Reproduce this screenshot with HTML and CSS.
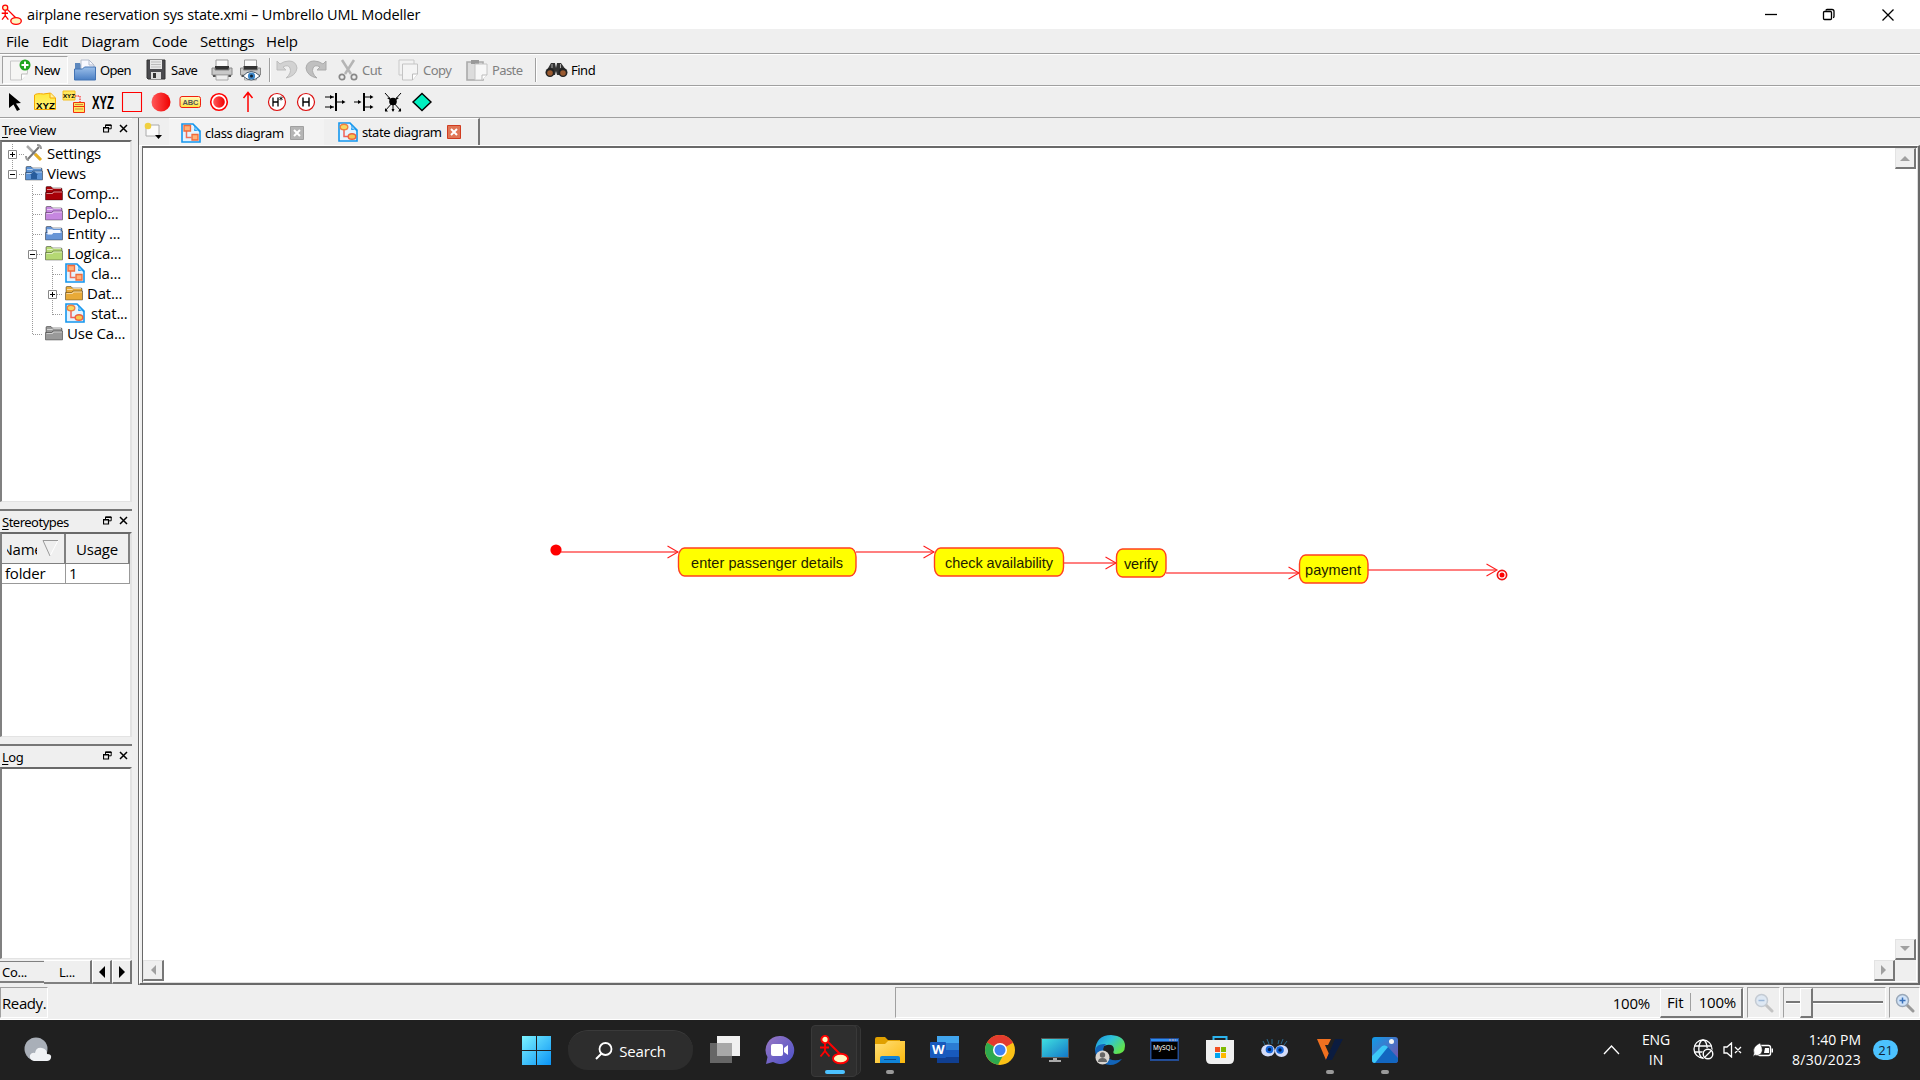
FILE: index.html
```html
<!DOCTYPE html>
<html lang="en">
<head>
<meta charset="utf-8">
<title>airplane reservation sys state.xmi – Umbrello UML Modeller</title>
<link rel="stylesheet" href="styles.css">
</head>
<body>
<svg class="defs" width="0" height="0">
  <defs>
    <linearGradient id="gRed"><stop offset="0" stop-color="#ff5a5a"/><stop offset="1" stop-color="#f00000"/></linearGradient>
    <linearGradient id="gYel" x2="0" y2="1"><stop offset="0" stop-color="#fffbc0"/><stop offset="1" stop-color="#ffe23c"/></linearGradient>
    <linearGradient id="gNote" x2="0" y2="1"><stop offset="0" stop-color="#ffe83c"/><stop offset="1" stop-color="#fff27a"/></linearGradient>
    <linearGradient id="gBlue" x2="0" y2="1"><stop offset="0" stop-color="#9dc0ea"/><stop offset="1" stop-color="#4a7fc4"/></linearGradient>
    <linearGradient id="gWin" x2="1" y2="1"><stop offset="0" stop-color="#7cf3ff"/><stop offset="1" stop-color="#0a93f5"/></linearGradient>
    <linearGradient id="gChat" x2="1" y2="1"><stop offset="0" stop-color="#9a78c4"/><stop offset="1" stop-color="#4a50c8"/></linearGradient>
    <linearGradient id="gFold" x2="1" y2="1"><stop offset="0" stop-color="#ffdf78"/><stop offset="1" stop-color="#fbb80c"/></linearGradient>
    <linearGradient id="gMon" x2="1" y2="1"><stop offset="0" stop-color="#3fe0e0"/><stop offset="1" stop-color="#1478c8"/></linearGradient>
    <linearGradient id="gEdge" x2="1" y2=".6"><stop offset="0" stop-color="#1b8be0"/><stop offset=".5" stop-color="#2fc4d8"/><stop offset="1" stop-color="#62e34a"/></linearGradient>
    <linearGradient id="gPhoto" x2="1" y2="1"><stop offset="0" stop-color="#0f9be8"/><stop offset="1" stop-color="#7a4fa8"/></linearGradient>
    <symbol id="folder" viewBox="0 0 18 16"><path d="M1 14V2.500q0-1 1-1h4l1.500 1.500H16q1 0 1 1V14z" fill="currentColor" stroke="#0006"/><path d="M2 4.500h5l1.500-1H16" stroke="#fff9" fill="none"/><path d="M.5 15V7.500h6l1.500-1.500h9.500V15z" fill="currentColor" stroke="#0005"/><path d="M1.500 8.500h6L8.500 7H17" stroke="#fff8" fill="none"/></symbol>
    <symbol id="classdoc" viewBox="0 0 20 20"><path d="M1 1h11l7 7v11H1z" fill="#e4f3ff" stroke="#1597ee" stroke-width="1.600"/><path d="M12 1q3 2 1.500 6.500Q17 6 19 9z" fill="#a9dcff" stroke="#1597ee"/><path d="M5.500 8v6.500h5" fill="none" stroke="#f0705a" stroke-width="1.500"/><path d="M3 2.500h6.500v5.500H3zM11 11.500h6v5.500h-6z" fill="#ffb27a" stroke="#f06a3a" stroke-width="1.300"/></symbol>
    <symbol id="statedoc" viewBox="0 0 20 20"><path d="M1 1h11l7 7v11H1z" fill="#e4f3ff" stroke="#1597ee" stroke-width="1.600"/><path d="M12 1q3 2 1.500 6.500Q17 6 19 9z" fill="#a9dcff" stroke="#1597ee"/><path d="M6 7v7.500h4" fill="none" stroke="#f0605a" stroke-width="1.500"/><ellipse cx="6" cy="5" rx="3.800" ry="2.800" fill="#f6d860" stroke="#f08040" stroke-width="1.400"/><ellipse cx="14" cy="14.500" rx="3.800" ry="2.800" fill="#f6c850" stroke="#f06040" stroke-width="1.400"/></symbol>
    <symbol id="umbrello" viewBox="0 0 30 30"><g stroke="#f00" stroke-width="1.900" fill="#fff6c0"><path d="M6 8v8M1 12.500h9M6 16l-4.500 5.500M6 16l4.500 5.500M9 7l12 12" fill="none"/><circle cx="6" cy="4.500" r="3.600"/><ellipse cx="21.500" cy="23.500" rx="7.500" ry="4.800"/></g></symbol>
    <symbol id="restore" viewBox="0 0 9 9"><path d="M2.500 3V.8h5.700v4H6M2.500 1.500h6" fill="none" stroke="#000"/><path d="M.5 3.500h5v4.500h-5zM.5 4h5" fill="none" stroke="#000" stroke-width="1.200"/></symbol>
    <symbol id="close" viewBox="0 0 9 9"><path d="M1 1l7 7M8 1L1 8" stroke="#000" stroke-width="1.500"/></symbol>
    <symbol id="printer" viewBox="0 0 22 22"><path d="M5 1h12v9H5z" fill="#fafafa" stroke="#999"/><path d="M4 7h14v4H4z" fill="#333"/><path d="M1 9h3v2h14V9h3v7H1z" fill="#c9c9c9" stroke="#888"/><path d="M2 16h18v2H2z" fill="#555"/><path d="M5 16h12v5H5z" fill="#eee" stroke="#aaa"/></symbol>
    <symbol id="glass" viewBox="0 0 20 20"><path d="M12 12l6 6" stroke="#999" stroke-width="3" stroke-linecap="round"/><circle cx="7.500" cy="7.500" r="6" fill="#cfe2f8" stroke="#9aa8b8" stroke-width="1.500"/></symbol>
  </defs>
</svg>

<header class="titlebar">
  <svg class="app-icon" width="21" height="22"><use href="#umbrello"/></svg>
  <span class="title">airplane reservation sys state.xmi – Umbrello UML Modeller</span>
  <svg class="win-buttons" width="132" height="14"><g fill="none" stroke="#000" stroke-width="1.300"><path d="M0 6.500h12"/><path d="M58.500 4.500q0-1 1-1h6q1 0 1 1v6q0 1-1 1h-6q-1 0-1-1zM61 2.500q0-1 1-1h5q2 0 2 2v5q0 1-1 1"/><path d="M117.500 1.500l11 11M128.500 1.500l-11 11"/></g></svg>
</header>

<nav class="menubar"><span class="m1">File</span><span class="m2">Edit</span><span class="m3">Diagram</span><span class="m4">Code</span><span class="m5">Settings</span><span class="m6">Help</span></nav>

<div class="toolbar">
  <div class="tool tool-new"><svg width="22" height="22"><path d="M1.500 2h17v12l-6 7h-11z" fill="#f6f6f4" stroke="#c8c8c8"/><path d="M12.500 21v-6h6" fill="#fff" stroke="#bbb"/><circle cx="16" cy="6" r="5.500" fill="#1ea51e"/><path d="M16 2.500v7M12.500 6h7" stroke="#fff" stroke-width="2"/></svg><span>New</span></div>
  <div class="tool tool-open"><svg width="23" height="22"><path d="M1 4h5l1 2v8H1z" fill="#5d88be"/><path d="M7 1h8l5 5v9H7z" fill="#f8f8ff" stroke="#b4bccc"/><path d="M15 1v5h5" fill="none" stroke="#b4bccc"/><path d="M.5 21V10h8l2-2h11v13z" fill="url(#gBlue)" stroke="#4474b4"/></svg><span>Open</span></div>
  <div class="tool tool-save"><svg width="20" height="21"><path d="M1 1h18v19H2l-1-1z" fill="#4a4a4e" stroke="#333"/><path d="M4 1h12v9H4z" fill="#e8e8e8"/><path d="M5 3h10M5 5.500h10M5 8h10" stroke="#bbb"/><path d="M5 13h10v7H5z" fill="#ddd"/><path d="M7 14h3v5H7z" fill="#333"/></svg><span>Save</span></div>
  <svg class="ic-print" width="22" height="22"><use href="#printer"/></svg>
  <svg class="ic-preview" width="23" height="22"><use href="#printer"/><path d="M4 17q8-9 17 0q-9 8-17 0z" fill="#fff" stroke="#456"/><circle cx="12.500" cy="17" r="3.600" fill="#3b86c8"/><circle cx="12.500" cy="17" r="1.500" fill="#123"/></svg>
  <i class="sep sep-a"></i>
  <svg class="ic-undo" width="22" height="20"><path d="M1 1v9h9L7 7q5-3 7 1 2 5-4 10 10-2 11-10Q20 1 13 1 8 1 4 4z" fill="#d2d2d2" stroke="#bdbdbd"/></svg>
  <svg class="ic-redo" width="22" height="20"><path d="M21 1v9h-9l3-3q-5-3-7 1-2 5 4 10Q2 16 1 8 2 1 9 1q5 0 9 3z" fill="#c0c0c0" stroke="#ababab"/></svg>
  <div class="tool off tool-cut"><svg width="20" height="22"><path d="M4 1l9 14M16 1L7 15" stroke="#b5b5b5" stroke-width="2.500"/><circle cx="4" cy="18" r="2.700" fill="none" stroke="#888" stroke-width="1.700"/><circle cx="16" cy="18" r="2.700" fill="none" stroke="#888" stroke-width="1.700"/></svg><span>Cut</span></div>
  <div class="tool off tool-copy"><svg width="21" height="22"><path d="M1 1h15v15H1z" fill="#f2f2f2" stroke="#c9c9c9"/><path d="M4.500 5h15v10l-5 6h-10z" fill="#f4f4f4" stroke="#c4c4c4"/><path d="M14.500 21v-6h5" fill="#fff" stroke="#bbb"/></svg><span>Copy</span></div>
  <div class="tool off tool-paste"><svg width="22" height="22"><path d="M1 3h16v18H1z" fill="#dcdcdc" stroke="#aaa" stroke-width="1.600"/><path d="M5 1h8v4H5z" fill="#999"/><path d="M9 5h12v11l-5 5H9z" fill="#f7f7f7" stroke="#c4c4c4"/><path d="M16 21v-5h5" fill="#fff" stroke="#bbb"/></svg><span>Paste</span></div>
  <i class="sep sep-b"></i>
  <div class="tool tool-find"><svg width="23" height="18"><path d="M2 9L6 2h4l1 5 1-5h4l5 7-5 5h-4l-1-4-1 4H5z" fill="#333"/><circle cx="5" cy="11.500" r="4.500" fill="#222"/><circle cx="18" cy="11.500" r="4.500" fill="#222"/><circle cx="5" cy="12" r="2.800" fill="#9a5a30"/><circle cx="18" cy="12" r="2.800" fill="#9a5a30"/><path d="M7 3v4M15.500 3v4" stroke="#aaa"/></svg><span>Find</span></div>
</div>

<div class="palette">
  <svg viewBox="0 0 24 24"><path d="M5 3l12 10-5 .5 4 6-3 1.500-3.500-6.500L5 18z" fill="#000"/></svg>
  <svg viewBox="0 0 24 24"><path d="M1.500 19.500V5q2-2 9-1l7-1 5 5v11.500z" fill="url(#gNote)" stroke="#f5a800"/><path d="M17 3v5h5" fill="#fff2a0" stroke="#f5a800"/><text x="3" y="18.500" class="xyz-s" textLength="19" lengthAdjust="spacingAndGlyphs">XYZ</text></svg>
  <svg viewBox="0 0 24 24"><path d="M1 1h12v9H1z" fill="#ffe860" stroke="#f5c020"/><text x="1" y="8" class="xyz-t" textLength="12" lengthAdjust="spacingAndGlyphs">XYZ</text><path d="M13 6h5v6" fill="none" stroke="red" stroke-dasharray="1.500 1"/><path d="M11.500 12.500h11v10h-11zM11.500 16.500h11" fill="#ffe860" stroke="#f03010"/><path d="M13 14.500h8M13 19h8" stroke="#c84"/></svg>
  <svg viewBox="0 0 24 24"><text x="1" y="18.500" class="xyz-l" textLength="22" lengthAdjust="spacingAndGlyphs">XYZ</text></svg>
  <svg viewBox="0 0 24 24"><path d="M2.500 2.500h19v19h-19z" fill="none" stroke="red" stroke-width="1.100"/></svg>
  <svg viewBox="0 0 24 24"><circle cx="12" cy="12" r="9.500" fill="url(#gRed)"/></svg>
  <svg viewBox="0 0 24 24"><rect x="2" y="6.500" width="20.500" height="11" rx="2" fill="url(#gYel)" stroke="#f02010"/><text x="4.500" y="15" class="abc" textLength="16">ABC</text></svg>
  <svg viewBox="0 0 24 24"><circle cx="12" cy="12" r="8.300" fill="#fff" stroke="#f00" stroke-width="1.600"/><circle cx="12" cy="12" r="5.800" fill="url(#gRed)"/></svg>
  <svg viewBox="0 0 24 24"><path d="M12 22V3M7.500 8L12 2.500 16.500 8" fill="none" stroke="red" stroke-width="1.500"/></svg>
  <svg viewBox="0 0 24 24"><circle cx="12" cy="12" r="8.500" fill="#fff" stroke="#dc1010" stroke-width="1.200"/><path d="M8 7.500v9M13 7.500v9M8 12h5" stroke="#000" stroke-width="1.300"/><path d="M16 6.500v4M14.300 7.500l3.400 2M17.700 7.500l-3.400 2" stroke="#000" stroke-width=".8"/></svg>
  <svg viewBox="0 0 24 24"><circle cx="12" cy="12" r="8.500" fill="#fff" stroke="#dc1010" stroke-width="1.200"/><path d="M9 7.500v9M15 7.500v9M9 12h6" stroke="#000" stroke-width="1.400"/></svg>
  <svg viewBox="0 0 24 24"><path d="M13 3v18" stroke="#000" stroke-width="2"/><path d="M2 7h9M2 17h9M14 12h7" stroke="#000"/><path d="M7 5l3.500 2L7 9zM7 15l3.500 2L7 19zM19 10l3.500 2-3.500 2z"/></svg>
  <svg viewBox="0 0 24 24"><path d="M12 3v18" stroke="#000" stroke-width="2"/><path d="M2 12h6M12 7h7M12 17h7" stroke="#000"/><path d="M6 10l3.500 2L6 14zM18 5l3.500 2L18 9zM18 15l3.500 2-3.500 2z"/></svg>
  <svg viewBox="0 0 24 24"><path d="M4 3l16 18M20 3L4 21M12 12v9" stroke="#000"/><circle cx="12" cy="11.500" r="3.800"/><path d="M6 8l3-.5V10zM18 8l-3-.5V10zM10.500 19h3l-1.500 3zM4 18v3.500h3zM20 18v3.500h-3z"/></svg>
  <svg viewBox="0 0 24 24"><path d="M12 3.500L21 12l-9 8.500L3 12z" fill="#00f0c0" stroke="#000" stroke-width="1.400"/></svg>
</div>

<main class="workspace">
  <aside class="docks">
    <section class="dock dock-tree">
      <div class="dock-title"><span><u>T</u>ree View</span><svg width="9" height="9"><use href="#restore"/></svg><svg width="9" height="9"><use href="#close"/></svg></div>
      <div class="sunken tree">
        <svg class="branches" width="80" height="200"><g fill="none" stroke="#999" stroke-dasharray="1 1"><path d="M10.500 2v28M17 12.500h5M17 32.500h5M30.500 43v150M31 52.500h9M31 72.500h9M31 92.500h9M31 112.500h9M31 192.500h9M50.500 124v49M51 132.500h9M51 152.500h9M51 172.500h9"/></g><g fill="#fff" stroke="#888"><path d="M6.500 8.500h8v8h-8zM6.500 28.500h8v8h-8zM26.500 108.500h8v8h-8zM46.500 148.500h8v8h-8z"/></g><path d="M8 12.500h5M10.500 10v5M8 32.500h5M28 112.500h5M48 152.500h5M50.500 150v5" stroke="#000"/></svg>
        <div class="row l0"><svg width="18" height="18"><path d="M2 2l13 13" stroke="#aaa" stroke-width="2.500"/><path d="M14 3L3 15" stroke="#777" stroke-width="2"/><path d="M10 10l6 6" stroke="#e8b020" stroke-width="3"/><path d="M12 1q4 0 4 4M1 12q0 4 3 4" stroke="#999" fill="none" stroke-width="2"/></svg><span>Settings</span></div>
        <div class="row l0 views"><svg width="18" height="16"><use href="#folder"/><path d="M9 6l4 4h-1v4H6v-4H5z" fill="#285c9c"/></svg><span>Views</span></div>
        <div class="row l1 c-red"><svg width="18" height="16"><use href="#folder"/></svg><span>Comp...</span></div>
        <div class="row l1 c-violet"><svg width="18" height="16"><use href="#folder"/></svg><span>Deplo...</span></div>
        <div class="row l1 c-blue"><svg width="18" height="16"><use href="#folder"/><path d="M2.500 5h13v3H8l-1 1.500H2.500z" fill="#f4f8ff"/></svg><span>Entity ...</span></div>
        <div class="row l1 c-green"><svg width="18" height="16"><use href="#folder"/></svg><span>Logica...</span></div>
        <div class="row l2"><svg class="doc" width="20" height="20"><use href="#classdoc"/></svg><span>cla...</span></div>
        <div class="row l2 c-gold"><svg width="18" height="16"><use href="#folder"/></svg><span>Dat...</span></div>
        <div class="row l2"><svg class="doc" width="20" height="20"><use href="#statedoc"/></svg><span>stat...</span></div>
        <div class="row l1 c-gray"><svg width="18" height="16"><use href="#folder"/></svg><span>Use Ca...</span></div>
      </div>
    </section>
    <section class="dock dock-stereo">
      <div class="dock-title"><span><u>S</u>tereotypes</span><svg width="9" height="9"><use href="#restore"/></svg><svg width="9" height="9"><use href="#close"/></svg></div>
      <div class="sunken">
        <div class="grid">
          <div class="th th-name"><span class="clip"><span>Name</span></span><svg width="17" height="17"><path d="M16 .5L8 16" stroke="#fff"/><path d="M16 .5H1L8 16" fill="none" stroke="#999"/></svg></div><div class="th">Usage</div>
          <div class="td">folder</div><div class="td">1</div>
        </div>
      </div>
    </section>
    <section class="dock dock-log">
      <div class="dock-title"><span><u>L</u>og</span><svg width="9" height="9"><use href="#restore"/></svg><svg width="9" height="9"><use href="#close"/></svg></div>
      <div class="sunken"></div>
      <div class="dock-tabs"><span class="dt dt-a">Co...</span><span class="dt dt-b">L...</span><span class="arrow"><svg width="8" height="12"><path d="M7 0v12L1 6z"/></svg></span><span class="arrow"><svg width="8" height="12"><path d="M1 0v12l6-6z"/></svg></span></div>
    </section>
  </aside>

  <section class="editor">
    <div class="tabs">
      <div class="newtab"><svg width="20" height="18"><path d="M3 3h12v11H2V6" fill="#fbfbfb" stroke="#aaa"/><circle cx="4" cy="4" r="3.300" fill="#f0d040"/><path d="M11 13h7l-3.500 4z"/></svg></div>
      <div class="tab"><svg width="20" height="20"><use href="#classdoc"/></svg><span>class diagram</span><svg class="x" width="14" height="14"><path d="M.5.500h13v13H.5z" fill="#b5b5b5" stroke="#a0a0a0"/><path d="M4 4l6 6M10 4l-6 6" stroke="#fff" stroke-width="2"/></svg></div>
      <div class="tab active"><svg width="20" height="20"><use href="#statedoc"/></svg><span>state diagram</span><svg class="x" width="14" height="14"><path d="M.5.500h13v13H.5z" fill="#e07656" stroke="#d03c20"/><path d="M4 4l6 6M10 4l-6 6" stroke="#fff" stroke-width="2"/></svg></div>
    </div>
    <div class="pane">
      <div class="canvas">
        <svg class="diagram" viewBox="143 148 1775 834" width="1775" height="834">
          <defs><clipPath id="cutA"><path d="M600 540h500v30.500H600z"/></clipPath><clipPath id="cutB"><path d="M1300 550h70v27.500h-70z"/></clipPath></defs>
          <g fill="none" stroke="#ff7f7f" stroke-width="2"><path d="M561 552h117M856 552h78M1064 563h52M1166 573h133M1368 570h128"/></g>
          <g fill="none" stroke="#ff2020" stroke-width="1.100"><path d="M667.500 546l10.500 6-10.500 6M923.500 546l10.500 6-10.500 6M1105.500 557l10.500 6-10.500 6M1288.500 567l10.500 6-10.500 6M1486.500 564l10.500 6-10.500 6"/></g>
          <circle cx="556" cy="550" r="5.600" fill="red"/>
          <g fill="#ff0" stroke="#ff4020" stroke-width="1.400"><rect x="678.500" y="548" width="177.500" height="28" rx="6" ry="9"/><rect x="934.500" y="548" width="129" height="28" rx="6" ry="9"/><rect x="1116.500" y="549" width="49.500" height="28" rx="6" ry="8"/><rect x="1299.500" y="555" width="68.500" height="28" rx="6" ry="9"/></g>
          <g class="state-label"><g clip-path="url(#cutA)"><text x="691" y="568" textLength="152">enter passenger details</text><text x="945" y="568" textLength="108">check availability</text></g><text x="1124" y="569" textLength="34">verify</text><g clip-path="url(#cutB)"><text x="1305" y="575" textLength="56">payment</text></g></g>
          <circle cx="1502" cy="575" r="4.600" fill="#fff" stroke="#f01010" stroke-width="1.700"/><circle cx="1502" cy="575" r="2.500" fill="red"/>
        </svg>
        <span class="sb sb-up"><svg width="10" height="6"><path d="M0 6l5-5 5 5z"/></svg></span>
        <span class="sb sb-down"><svg width="10" height="6"><path d="M0 0l5 5 5-5z"/></svg></span>
        <span class="sb sb-left"><svg width="6" height="10"><path d="M6 0L1 5l5 5z"/></svg></span>
        <span class="sb sb-right"><svg width="6" height="10"><path d="M0 0l5 5-5 5z"/></svg></span>
        <span class="sb-corner"></span>
      </div>
    </div>
  </section>
</main>

<footer class="status">
  <div class="ready">Ready.</div>
  <div class="cell zoomtext"><span>100%</span><div class="raised"><span>Fit</span><i></i><span>100%</span></div></div>
  <div class="cell mag"><svg class="dim" width="20" height="20"><use href="#glass"/><path d="M4.500 7.500h6" stroke="#4a80c0" stroke-width="1.500"/></svg></div>
  <div class="cell slider"><i class="track"></i><i class="thumb"></i></div>
  <div class="cell mag last"><svg width="20" height="20"><use href="#glass"/><path d="M4.500 7.500h6M7.500 4.500v6" stroke="#3a70b8" stroke-width="1.500"/></svg></div>
</footer>

<div class="taskbar">
  <div class="weather"><svg width="32" height="28"><circle cx="14" cy="13" r="11.500" fill="#a9afb8"/><path d="M12 25q-5-1-4-6 2-3 5-2 1-6 7-5 5 1 5 6 5 0 4 4-1 3-4 3z" fill="#f0f2f5"/></svg></div>
  <div class="apps">
    <div class="app start"><svg width="29" height="29"><path d="M0 0h14v14H0zM15 0h14v14H15zM0 15h14v14H0zM15 15h14v14H15z" fill="url(#gWin)"/></svg></div>
    <div class="search"><svg width="18" height="18"><circle cx="10.500" cy="7" r="6" fill="none" stroke="#fff" stroke-width="1.800"/><path d="M6.500 11.500L1 17" stroke="#fff" stroke-width="2"/></svg><span>Search</span></div>
    <div class="app"><svg width="30" height="30"><path d="M7 1h23v20H7z" fill="#f0f0f0"/><path d="M0 8h22v20H0z" fill="#666"/><path d="M7 8h15v13H7z" fill="#a8a8a8"/></svg></div>
    <div class="app"><svg width="30" height="30"><path d="M15 1a14 14 0 1 1-7 26l-7 2 1.500-7A14 14 0 0 1 15 1z" fill="url(#gChat)"/><rect x="6" y="9" width="12" height="12" rx="2" fill="#fff"/><path d="M19 13l4-3v10l-4-3z" fill="#fff"/></svg></div>
    <div class="app current"><i class="stack"></i><svg width="32" height="30"><use href="#umbrello"/></svg></div>
    <div class="app open"><svg width="30" height="30"><path d="M0 4q0-2 2-2h8l3 3h12v7H0z" fill="#e0a000"/><path d="M0 9h10l3-3h17v22H0z" fill="url(#gFold)"/><path d="M5 28v-5q0-2 2-2h16q2 0 2 2v5z" fill="#1084d8"/><path d="M9 24.500h12" stroke="#0a4c90"/></svg></div>
    <div class="app"><svg width="30" height="30"><path d="M7 1h22v7H7z" fill="#41a5ee"/><path d="M7 8h22v7H7z" fill="#2b7cd3"/><path d="M7 15h22v7H7z" fill="#185abd"/><path d="M7 22h22v6H7z" fill="#103f91"/><rect y="7" width="16" height="16" rx="1" fill="#185abd"/><text x="2" y="19" class="word">W</text></svg></div>
    <div class="app"><svg width="30" height="30"><circle cx="15" cy="15" r="15" fill="#fbc116"/><path d="M15 15L2 7.500A15 15 0 0 1 28 7.500z" fill="#e33b2e"/><path d="M15 15L2 7.500A15 15 0 0 0 13 29.800l6-11z" fill="#2da94f"/><path d="M15 7.500h13L15 15z" fill="#e33b2e"/><circle cx="15" cy="15" r="7" fill="#fff"/><circle cx="15" cy="15" r="5.500" fill="#3e82f1"/></svg></div>
    <div class="app"><svg width="28" height="28"><path d="M0 2h28v20H0z" fill="#555"/><path d="M1 3h26v18H1z" fill="url(#gMon)"/><path d="M12 22h4v2h4v2H8v-2h4z" fill="#aaa"/></svg></div>
    <div class="app"><svg width="30" height="30"><path d="M0 16Q1 0 16 0q14 1 14 11 0 8-9 8-4 0-2-4 0-6-7-5Q3 12 0 16z" fill="url(#gEdge)"/><path d="M0 15Q2 8 11 9q-5 4-1 11 6 8 17 4-5 6-12 6Q1 29 0 15z" fill="#1264b8"/><circle cx="7.500" cy="22.500" r="7" fill="#d8d4d0"/><circle cx="7.500" cy="20" r="2.700" fill="#666"/><path d="M3 27q0-4 4.500-4t4.500 4z" fill="#666"/></svg></div>
    <div class="app"><svg width="29" height="26"><path d="M0 1h29v23H0z" fill="#234c94"/><path d="M1.500 5h26v17h-26z" fill="#000"/><path d="M1 2h27v2H1z" fill="#2d8df0"/><path d="M19 3h7" stroke="#f8a090" stroke-dasharray="2 1"/><text x="3" y="13" class="mysql" textLength="23" lengthAdjust="spacingAndGlyphs">MySQL›</text></svg></div>
    <div class="app"><svg width="30" height="30"><path d="M8.500 7V2h13v5" fill="none" stroke="#2cb4ee" stroke-width="2"/><path d="M1 5h28v19q0 5-5 5H6q-5 0-5-5z" fill="#f0f0f0"/><path d="M10 12h5v5h-5z" fill="#f25022"/><path d="M16 12h5v5h-5z" fill="#7fba00"/><path d="M10 18h5v5h-5z" fill="#00a4ef"/><path d="M16 18h5v5h-5z" fill="#ffb900"/></svg></div>
    <div class="app"><svg width="28" height="22"><path d="M4 6L2 2M8 5L6 0M11 5V0M17 5l1-4M20 5l2-5M23 6l3-4" stroke="#2d7caa" stroke-width=".8"/><ellipse cx="7" cy="11.500" rx="6.800" ry="6" fill="#d4dcf8"/><ellipse cx="20.500" cy="12" rx="6.600" ry="6" fill="#d4dcf8"/><circle cx="8.500" cy="10.500" r="3.800" fill="#1465d8"/><circle cx="19" cy="11" r="3.800" fill="#1465d8"/><circle cx="8.500" cy="10.500" r="1.700" fill="#001b4c"/><circle cx="19" cy="11" r="1.700" fill="#001b4c"/></svg></div>
    <div class="app open"><svg width="26" height="24"><path d="M0 1h14l-3 6H8l4 9-3 6z" fill="#f07020"/><path d="M26 1h-8l-9 21h6z" fill="#0b1c40"/></svg></div>
    <div class="app open"><svg width="26" height="28"><rect y="1" width="26" height="26" rx="3" fill="url(#gPhoto)"/><path d="M0 21l10-11q3-2 6 1l10 11v2q0 3-3 3H3q-3 0-3-3z" fill="#1266c0"/><path d="M0 20l10-10q3-2 6 1L3 27q-3 0-3-3z" fill="#3cc8f8"/><circle cx="19.500" cy="5.500" r="2.500" fill="#f4f4f4"/></svg></div>
  </div>
  <div class="tray">
    <svg class="chev" width="17" height="10"><path d="M1 9l7.500-8L16 9" fill="none" stroke="#fff" stroke-width="1.300"/></svg>
    <div class="lang">ENG<br>IN</div>
    <svg class="globe" width="22" height="22"><g fill="none" stroke="#fff" stroke-width="1.300"><circle cx="10" cy="10" r="9"/><ellipse cx="10" cy="10" rx="4.200" ry="9"/><path d="M1.500 7h17M1.500 13h9"/></g><circle cx="15" cy="15" r="6" fill="#202020"/><circle cx="15" cy="15" r="4.800" fill="none" stroke="#fff" stroke-width="1.400"/><path d="M11.500 18.500l7-7" stroke="#fff" stroke-width="1.300"/></svg>
    <svg class="speaker" width="20" height="16"><path d="M1 5h3l4.500-4v14L4 11H1zM12 5l6 6M18 5l-6 6" fill="none" stroke="#fff" stroke-width="1.300"/></svg>
    <svg class="battery" width="21" height="16"><rect x="5" y="3.500" width="12.500" height="10" rx="2" fill="none" stroke="#fff" stroke-width="1.400"/><path d="M12 6h4v5h-5z" fill="#fff"/><path d="M18.500 6.500h1.500v4h-1.500z" fill="#fff"/><path d="M0 15l1-4Q-1 5 7 1q5 9-1 12-2 1-4 0z" fill="#fff" stroke="#202020" stroke-width=".5"/></svg>
    <div class="clock"><span>1:40 PM</span><span class="date">8/30/2023</span></div>
    <div class="badge">21</div>
  </div>
</div>
</body>
</html>
```
FILE: styles.css
```css
* { box-sizing: border-box; }
body { margin: 0; width: 1920px; height: 1080px; overflow: hidden; display: flex; flex-direction: column; background: #efefef; color: #000; font: 15px/20px "Open Sans", "Noto Sans", sans-serif; }
svg { display: block; flex: none; }
span { white-space: nowrap; }
.defs { position: absolute; }
.titlebar { height: 29px; flex: none; background: #fff; display: flex; align-items: center; padding: 0 23px 0 1px; }
.app-icon { margin-right: 5px; }
.title { font-size: 14.500px; letter-spacing: -.17px; }
.win-buttons { margin-left: auto; }
.menubar { height: 25px; flex: none; display: flex; align-items: center; padding-left: 6px; border-bottom: 1px solid #a0a0a0; box-shadow: 0 1px #fff; }
.menubar span { font-size: 15px; letter-spacing: -.15px; }
.m1 { width: 36px; } .m2 { width: 39px; } .m3 { width: 71px; } .m4 { width: 48px; } .m5 { width: 66px; }
.toolbar { height: 32px; flex: none; display: flex; align-items: center; border-bottom: 1px solid #a0a0a0; box-shadow: 0 1px #fff; padding-left: 2px; font: 13px/20px "Noto Sans", sans-serif; letter-spacing: -.5px; }
.tool { display: flex; align-items: center; height: 28px; gap: 4px; }
.tool-new { width: 66px; padding-left: 6px; gap: 3px; border: 1px solid #a0a0a0; border-right-color: #fff; border-bottom-color: #fff; background: #f4f4f4; }
.tool-open { width: 72px; padding-left: 6px; gap: 3px; }
.tool-open span { letter-spacing: -.7px; }
.tool-save { width: 71px; padding-left: 6px; gap: 5px; }
.ic-preview { margin-left: 6px; }
.sep { width: 2px; height: 24px; border-left: 1px solid #a0a0a0; border-right: 1px solid #fff; }
.sep-a { margin: 0 5px 0 7px; }
.ic-redo { margin-left: 7px; }
.off { color: #808080; }
.tool-cut { margin-left: 11px; width: 60px; }
.tool-copy { width: 68px; }
.tool-paste { width: 69px; }
.tool-paste span { letter-spacing: -.6px; }
.sep-b { margin-right: 8px; }
.tool-find { gap: 3px; }
.palette { height: 32px; flex: none; display: flex; align-items: center; gap: 5px; padding-left: 4px; border-bottom: 1px solid #a0a0a0; }
.palette svg { width: 24px; height: 24px; }
.xyz-s { font: bold 9px "Liberation Sans", sans-serif; }
.xyz-t { font: bold 6px "Liberation Sans", sans-serif; }
.xyz-l { font: bold 18px "Liberation Sans", sans-serif; }
.abc { font: bold 7.500px "Liberation Sans", sans-serif; fill: #555; }
.workspace { height: 867px; flex: none; display: flex; }
.docks { width: 138px; flex: none; display: flex; flex-direction: column; padding-right: 6px; }
.dock { display: flex; flex-direction: column; border-top: 1px solid #fff; }
.dock-tree { height: 391px; padding-bottom: 7px; }
.dock-stereo { height: 235px; border-top: 2px solid #777; padding-bottom: 7px; }
.dock-log { height: 241px; border-top: 2px solid #777; }
.dock-title { height: 21px; flex: none; display: flex; align-items: center; padding: 0 4px 0 2px; font: 13px/18px "Noto Sans", sans-serif; letter-spacing: -.5px; }
.dock-title span { flex: 1; }
.dock-title svg { margin: -3px 0 0 7px; }
.dock-title u { text-underline-offset: 2px; }
.sunken { flex: 1; position: relative; background: #fff; border: 1px solid #a0a0a0; border-top: 2px solid #696969; border-left: 2px solid #808080; border-right: 2px solid #e3e3e3; border-bottom-color: #e3e3e3; }
.branches { position: absolute; left: 0; top: 0; }
.row { position: relative; top: 0; height: 20px; display: flex; align-items: center; gap: 4px; font-size: 15px; letter-spacing: -.2px; }
.tree { padding-top: 1px; }
.l0 { padding-left: 23px; } .l1 { padding-left: 43px; } .l2 { padding-left: 63px; }
.doc + span { margin-left: 2px; }
.row span { color: #000; }
.views { color: #5b92d4; }
.c-red { color: #a80008; } .c-violet { color: #c687e0; } .c-blue { color: #6694d6; } .c-green { color: #b5d873; } .c-gold { color: #e8aa38; } .c-gray { color: #999; }
.grid { display: grid; grid-template-columns: 64px 64px; grid-template-rows: 30px 20px; font-size: 15px; letter-spacing: -.2px; }
.th { background: #efefef; border-right: 2px solid #808080; border-bottom: 1px solid #808080; display: flex; align-items: center; justify-content: center; }
.th-name { gap: 5px; }
.clip { width: 30px; overflow: hidden; display: flex; justify-content: center; }
.td { border-right: 1px solid #999; border-bottom: 1px solid #999; padding-left: 3px; line-height: 18px; }
.dock-tabs { height: 26px; flex: none; display: flex; padding-top: 1px; font: 13px/23px "Noto Sans", sans-serif; letter-spacing: -.3px; }
.dt { border-top: 1px solid #808080; border-bottom: 2px solid #808080; }
.dt-a { width: 44px; height: 22px; padding-left: 2px; line-height: 20px; margin-top: 1px; }
.dt-b { width: 48px; height: 24px; text-align: center; border-top-color: #fff; border-right: 2px solid #777; }
.arrow { width: 20px; height: 24px; border: 1px solid #fff; border-right: 2px solid #777; border-bottom: 2px solid #777; display: flex; align-items: center; justify-content: center; }
.editor { flex: 1; display: flex; flex-direction: column; border-left: 1px solid #696969; }
.tabs { height: 27px; flex: none; display: flex; font: 13px/20px "Noto Sans", sans-serif; letter-spacing: -.4px; }
.newtab { width: 30px; padding: 4px 0 0 5px; }
.tab { width: 155px; display: flex; align-items: center; padding: 2px 0 0 12px; gap: 4px; background: #f3f3f3; border-top: 1px solid #fff; }
.tab span { width: 80px; }
.tab .x { margin-left: 1px; }
.tab.active { width: 156px; background: #efefef; padding: 0 0 0 14px; border-right: 2px solid #777; }
.pane { flex: 1; border: 1px solid #fff; border-right: 2px solid #696969; border-bottom: 2px solid #696969; padding: 0 0 0 2px; }
.canvas { position: relative; height: 837px; background: #fff; border-top: 2px solid #696969; border-left: 1px solid #696969; border-bottom: 1px solid #ddd; border-right: 1px solid #ddd; }
.diagram { width: 1775px; height: 834px; overflow: hidden; position: absolute; left: 0; top: 0; }
.state-label { font: 14.500px "Liberation Sans", sans-serif; fill: #221c00; }
.sb, .sb-corner { position: absolute; width: 21px; height: 21px; background: #efefef; }
.sb { display: flex; align-items: center; justify-content: center; fill: #a0a0a0; border: 1px solid #e3e3e3; border-right: 2px solid #777; border-bottom: 2px solid #777; }
.sb-up { right: 1px; top: 0; } .sb-down { right: 1px; bottom: 22px; } .sb-left { left: 0; bottom: 1px; } .sb-right { right: 22px; bottom: 1px; } .sb-corner { right: 1px; bottom: 1px; }
.status { height: 35px; flex: none; display: flex; padding: 2px 0 1px; gap: 3px; font-size: 15px; letter-spacing: -.2px; border-bottom: 1px solid #fff; }
.ready { width: 48px; border: 1px solid #a0a0a0; border-right-color: #fff; border-bottom-color: #fff; line-height: 31px; padding-left: 1px; letter-spacing: -.4px; }
.cell { border: 1px solid #a0a0a0; border-right-color: #fff; border-bottom-color: #fff; display: flex; align-items: center; }
.zoomtext { margin-left: auto; width: 849px; justify-content: flex-end; gap: 10px; }
.raised { width: 83px; height: 30px; display: flex; align-items: center; justify-content: space-between; padding: 0 5px 0 6px; border: 1px solid #fff; border-right: 2px solid #777; border-bottom: 2px solid #777; }
.raised i { height: 18px; border-left: 1px solid #a0a0a0; }
.mag { width: 33px; justify-content: center; }
.dim { opacity: .5; }
.slider { width: 103px; position: relative; padding: 0 2px; }
.track { width: 99px; height: 3px; border-top: 2px solid #777; border-bottom: 1px solid #fff; }
.thumb { position: absolute; left: 16px; top: 0; width: 13px; height: 30px; background: #efefef; border: 1px solid #fff; border-right: 2px solid #777; border-bottom: 2px solid #777; }
.last { width: 31px; }
.taskbar { height: 60px; flex: none; display: flex; align-items: center; background: #202020; color: #fff; }
.weather { width: 508px; padding-left: 22px; }
.apps { display: flex; align-items: center; height: 60px; }
.app { width: 55px; height: 60px; display: flex; align-items: center; justify-content: center; position: relative; }
.start { width: 57px; }
.search { width: 125px; height: 40px; margin: 0 4px 0 3px; border-radius: 20px; background: #2d2d2d; border-top: 1px solid #3a3a3a; display: flex; align-items: center; justify-content: center; gap: 6px; font-size: 15px; line-height: 18px; letter-spacing: -.2px; }
.current { z-index: 0; }
.current::before { content: ""; position: absolute; left: 4px; top: 5px; width: 44px; height: 50px; border-radius: 4px; background: #2e2e2e; border: 1px solid #393939; z-index: -1; }
.current .stack { position: absolute; left: 31px; top: 5px; width: 23px; height: 50px; border-radius: 5px; background: #292929; border: 1px solid #363636; z-index: -2; }
.current::after, .open::after { content: ""; position: absolute; bottom: 6px; width: 8px; height: 4px; border-radius: 2px; background: #9a9a9a; }
.current::after { width: 20px; background: #4cc2ff; }
.current svg { margin-right: 2px; }
.word { font: bold 13px "Open Sans", sans-serif; fill: #fff; }
.mysql { font: 7px "Noto Sans", sans-serif; fill: #fff; }
.tray { margin-left: auto; display: flex; align-items: center; padding-right: 22px; font-size: 14px; letter-spacing: -.1px; }
.chev { margin-right: 21px; }
.lang { width: 30px; text-align: center; margin-right: 22px; }
.globe { margin-right: 8px; } .speaker { margin-right: 10px; }
.clock { width: 87px; display: flex; flex-direction: column; align-items: flex-end; margin-right: 12px; letter-spacing: 0; }
.date { letter-spacing: .3px; }
.badge { width: 25px; height: 20px; border-radius: 10px; background: #4cc2ff; color: #123; text-align: center; font-size: 13px; line-height: 20px; }
```
